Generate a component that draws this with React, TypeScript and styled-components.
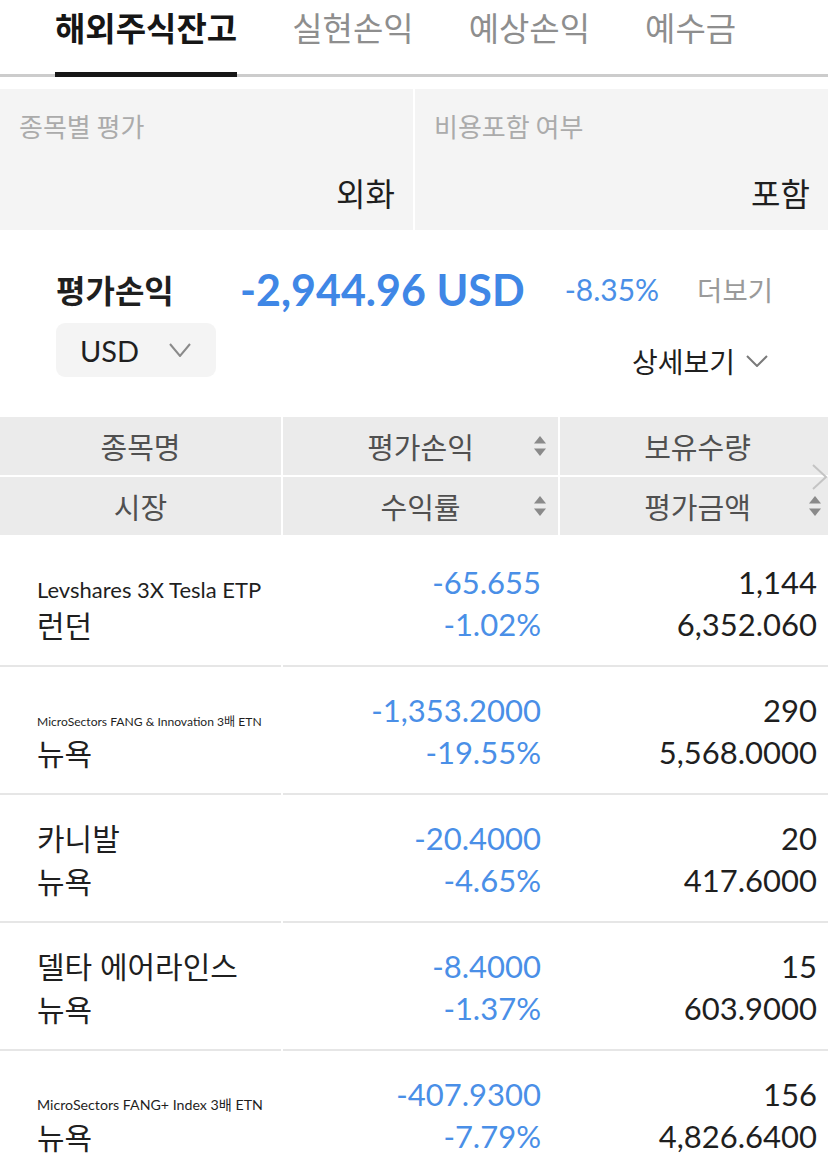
import styled, { createGlobalStyle } from "styled-components";

const GlobalStyle = createGlobalStyle`
  body {
    margin: 0;
    background: #ffffff;
  }
`;

const colours = {
  black: "#1f1f1f",
  grey: "#8c8c8c",
  lightGrey: "#ababab",
  panel: "#f4f4f4",
  head: "#ebebeb",
  line: "#e6e6e6",
  blue: "#4a8fe7",
  blueStrong: "#3f87e6"
};

const Page = styled.div`
  width: 828px;
  overflow: hidden;
  background: #fff;
  font-family: Lato, "Noto Sans CJK KR", sans-serif;
  color: ${colours.black};
`;

const TabBar = styled.div`
  display: flex;
  align-items: flex-start;
  gap: 55px;
  padding-left: 55px;
  height: 74px;
  border-bottom: 3px solid #cccccc;
`;

const Tab = styled.div<{ $active?: boolean }>`
  font-family: "Noto Sans CJK KR", sans-serif;
  font-size: 33px;
  line-height: 54px;
  height: ${(p) => (p.$active ? "72px" : "74px")};
  font-weight: ${(p) => (p.$active ? 700 : 400)};
  color: ${(p) => (p.$active ? "#161616" : "#8e8e8e")};
  border-bottom: ${(p) => (p.$active ? "5px solid #161616" : "none")};
  margin-bottom: ${(p) => (p.$active ? "-3px" : "0")};
`;

const OptionPanel = styled.div`
  display: grid;
  grid-template-columns: 413px 413px;
  gap: 2px;
  margin-top: 12px;
`;

const OptionCell = styled.div`
  background: ${colours.panel};
  padding: 22px 18px 20px 19px;
  display: flex;
  flex-direction: column;
  font-family: "Noto Sans CJK KR", sans-serif;
`;

const OptionLabel = styled.div`
  font-size: 26px;
  line-height: 30px;
  color: ${colours.lightGrey};
`;

const OptionValue = styled.div`
  margin-top: 33px;
  font-size: 32px;
  line-height: 36px;
  text-align: right;
  color: ${colours.black};
`;

const Summary = styled.div`
  padding: 34px 0 40px 0;
`;

const SummaryTop = styled.div`
  display: flex;
  align-items: center;
  height: 50px;
  padding-left: 56px;
`;

const SummaryLabel = styled.div`
  width: 184px;
  font-family: "Noto Sans CJK KR", sans-serif;
  font-size: 32px;
  font-weight: 700;
`;

const TotalAmount = styled.div`
  font-size: 43px;
  font-weight: 700;
  color: ${colours.blueStrong};
  margin-right: 40px;
  white-space: nowrap;
`;

const TotalRate = styled.div`
  font-size: 30px;
  color: ${colours.blue};
  margin-right: 38px;
`;

const MoreLink = styled.div`
  font-family: "Noto Sans CJK KR", sans-serif;
  font-size: 27.5px;
  color: #9a9a9a;
`;

const SummaryBottom = styled.div`
  display: flex;
  justify-content: space-between;
  align-items: flex-end;
  margin-top: 9px;
  padding: 0 60px 0 56px;
`;

const CurrencySelect = styled.div`
  width: 160px;
  height: 54px;
  box-sizing: border-box;
  padding-left: 24px;
  border-radius: 9px;
  background: ${colours.panel};
  display: flex;
  align-items: center;
  gap: 30px;
  font-size: 29px;
`;

const DetailToggle = styled.div`
  display: flex;
  align-items: center;
  gap: 11px;
  font-family: "Noto Sans CJK KR", sans-serif;
  font-size: 28px;
  line-height: 32px;
`;

const Table = styled.div`
  width: 835px;
`;

const TableHead = styled.div`
  position: relative;
  display: grid;
  grid-template-columns: 281px 275px 275px;
  grid-auto-rows: 58px;
  gap: 2px;
`;

const HeadCell = styled.div<{ $iconGap?: number }>`
  background: ${colours.head};
  display: grid;
  grid-template-columns: 1fr auto 1fr;
  align-items: center;
  font-family: "Noto Sans CJK KR", sans-serif;
  font-size: 29px;
  color: #505050;
  span {
    grid-column: 2;
  }
  svg {
    grid-column: 3;
    justify-self: end;
    margin-right: ${(p) => p.$iconGap ?? 11}px;
  }
`;

const ScrollHint = styled.div`
  position: absolute;
  top: 47px;
  left: 811px;
  display: flex;
`;

const TableBody = styled.div`
  padding-top: 4px;
`;

const Row = styled.div`
  display: grid;
  grid-template-columns: 283px 277px 275px;
`;

const NameCell = styled.div`
  margin-right: 2px;
  padding: 22px 0 20px 37px;
  border-bottom: 2px solid ${colours.line};
`;

const NameLine = styled.div<{ $size: number; $latin?: boolean }>`
  height: 42px;
  box-sizing: border-box;
  padding-top: ${(p) => (p.$latin ? 4 : 0)}px;
  font-size: 31px;
  line-height: 42px;
  white-space: nowrap;
  span {
    font-size: ${(p) => p.$size}px;
  }
`;

const MarketLine = styled.div`
  height: 42px;
  font-size: 31px;
  line-height: 42px;
  span {
    font-family: "Noto Sans CJK KR", sans-serif;
    font-size: 30px;
  }
`;

const NumCell = styled.div<{ $blue?: boolean; $pad: number }>`
  padding: 22px ${(p) => p.$pad}px 20px 0;
  border-bottom: 2px solid ${colours.line};
  text-align: right;
  font-size: 31px;
  line-height: 42px;
  color: ${(p) => (p.$blue ? colours.blue : colours.black)};
  div {
    height: 42px;
  }
`;

const SortIcon = () => (
  <svg width="14" height="22" viewBox="0 0 14 22">
    <path d="M7 1 L13 8.5 L1 8.5 Z" fill="#8a8a8a" />
    <path d="M1 13.5 L13 13.5 L7 21 Z" fill="#8a8a8a" />
  </svg>
);

const Chevron = ({ w, h, color }: { w: number; h: number; color: string }) => (
  <svg width={w} height={h} viewBox={`0 0 ${w} ${h}`}>
    <polyline
      points={`1,1 ${w / 2},${h - 1} ${w - 1},1`}
      fill="none"
      stroke={color}
      strokeWidth="2"
    />
  </svg>
);

interface Holding {
  name: string;
  nameSize: number;
  latin?: boolean;
  market: string;
  profit: string;
  rate: string;
  quantity: string;
  amount: string;
}

const holdings: Holding[] = [
  {
    name: "Levshares 3X Tesla ETP",
    nameSize: 22,
    latin: true,
    market: "런던",
    profit: "-65.655",
    rate: "-1.02%",
    quantity: "1,144",
    amount: "6,352.060"
  },
  {
    name: "MicroSectors FANG & Innovation 3배 ETN",
    nameSize: 12.1,
    latin: true,
    market: "뉴욕",
    profit: "-1,353.2000",
    rate: "-19.55%",
    quantity: "290",
    amount: "5,568.0000"
  },
  {
    name: "카니발",
    nameSize: 30,
    market: "뉴욕",
    profit: "-20.4000",
    rate: "-4.65%",
    quantity: "20",
    amount: "417.6000"
  },
  {
    name: "델타 에어라인스",
    nameSize: 30,
    market: "뉴욕",
    profit: "-8.4000",
    rate: "-1.37%",
    quantity: "15",
    amount: "603.9000"
  },
  {
    name: "MicroSectors FANG+ Index 3배 ETN",
    nameSize: 14.2,
    latin: true,
    market: "뉴욕",
    profit: "-407.9300",
    rate: "-7.79%",
    quantity: "156",
    amount: "4,826.6400"
  }
];

const tabs = ["해외주식잔고", "실현손익", "예상손익", "예수금"];

export default function App() {
  return (
    <Page>
      <GlobalStyle />
      <TabBar>
        {tabs.map((tab, i) => (
          <Tab key={tab} $active={i === 0}>
            {tab}
          </Tab>
        ))}
      </TabBar>

      <OptionPanel>
        <OptionCell>
          <OptionLabel>종목별 평가</OptionLabel>
          <OptionValue>외화</OptionValue>
        </OptionCell>
        <OptionCell>
          <OptionLabel>비용포함 여부</OptionLabel>
          <OptionValue>포함</OptionValue>
        </OptionCell>
      </OptionPanel>

      <Summary>
        <SummaryTop>
          <SummaryLabel>평가손익</SummaryLabel>
          <TotalAmount>-2,944.96 USD</TotalAmount>
          <TotalRate>-8.35%</TotalRate>
          <MoreLink>더보기</MoreLink>
        </SummaryTop>
        <SummaryBottom>
          <CurrencySelect>
            USD
            <Chevron w={22} h={14} color="#8a8a8a" />
          </CurrencySelect>
          <DetailToggle>
            상세보기
            <Chevron w={22} h={12} color="#7a7a7a" />
          </DetailToggle>
        </SummaryBottom>
      </Summary>

      <Table>
        <TableHead>
          <HeadCell>
            <span>종목명</span>
          </HeadCell>
          <HeadCell>
            <span>평가손익</span>
            <SortIcon />
          </HeadCell>
          <HeadCell>
            <span>보유수량</span>
          </HeadCell>
          <HeadCell>
            <span>시장</span>
          </HeadCell>
          <HeadCell>
            <span>수익률</span>
            <SortIcon />
          </HeadCell>
          <HeadCell $iconGap={13}>
            <span>평가금액</span>
            <SortIcon />
          </HeadCell>
          <ScrollHint>
            <svg width="17" height="26" viewBox="0 0 17 26">
              <polyline
                points="2,1 15,13 2,25"
                fill="none"
                stroke="#c4c4c4"
                strokeWidth="2"
              />
            </svg>
          </ScrollHint>
        </TableHead>

        <TableBody>
          {holdings.map((h) => (
            <Row key={h.name}>
              <NameCell>
                <NameLine $size={h.nameSize} $latin={h.latin}>
                  <span>{h.name}</span>
                </NameLine>
                <MarketLine>
                  <span>{h.market}</span>
                </MarketLine>
              </NameCell>
              <NumCell $blue $pad={19}>
                <div>{h.profit}</div>
                <div>{h.rate}</div>
              </NumCell>
              <NumCell $pad={18}>
                <div>{h.quantity}</div>
                <div>{h.amount}</div>
              </NumCell>
            </Row>
          ))}
        </TableBody>
      </Table>
    </Page>
  );
}
